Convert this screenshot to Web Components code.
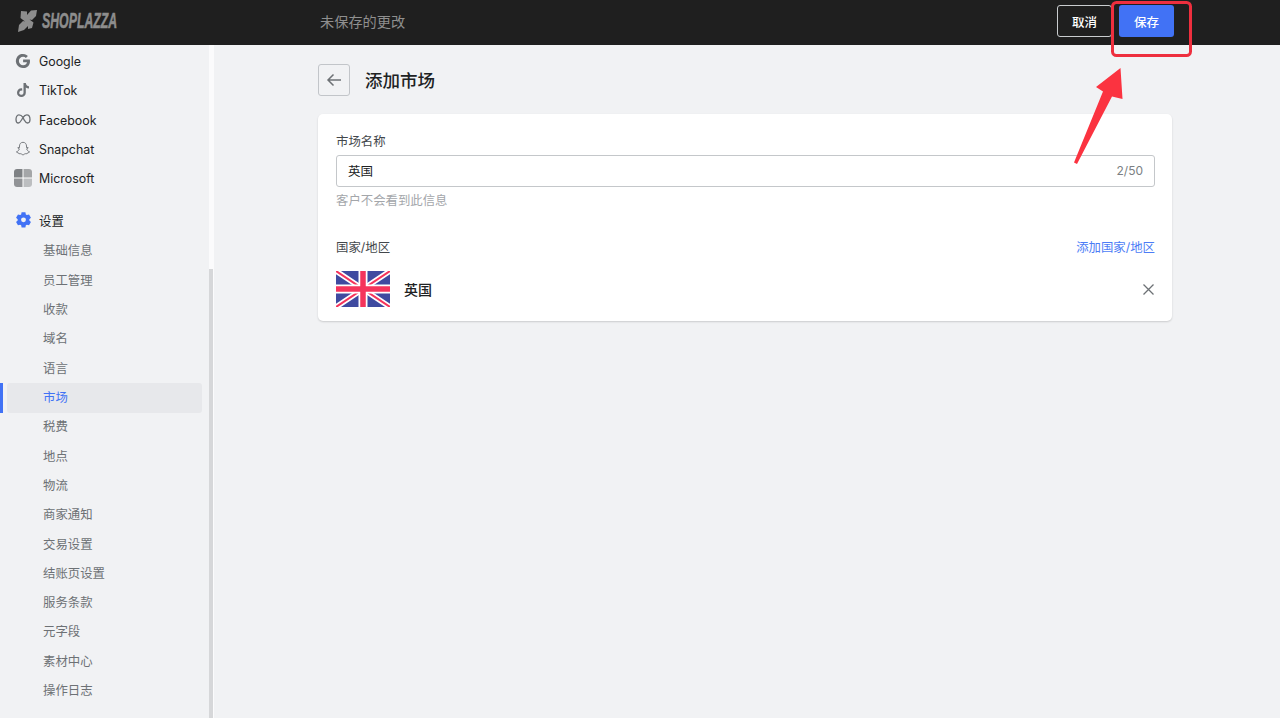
<!DOCTYPE html>
<html lang="zh">
<head>
<meta charset="utf-8">
<title>添加市场</title>
<style>
  html, body { margin: 0; height: 100%; }
  body {
    overflow: hidden;
    background: #f1f2f4;
    font-family: Inter, "Noto Sans CJK SC", sans-serif;
  }
</style>
</head>
<body>
<app-shell>
  <top-bar slot="top"></top-bar>
  <side-nav slot="side">
    <nav-item label="Google" icon="google"></nav-item>
    <nav-item label="TikTok" icon="tiktok"></nav-item>
    <nav-item label="Facebook" icon="meta"></nav-item>
    <nav-item label="Snapchat" icon="snapchat"></nav-item>
    <nav-item label="Microsoft" icon="microsoft"></nav-item>
    <nav-item label="设置" icon="gear" class="group"></nav-item>
    <nav-item label="基础信息" sub></nav-item>
    <nav-item label="员工管理" sub></nav-item>
    <nav-item label="收款" sub></nav-item>
    <nav-item label="域名" sub></nav-item>
    <nav-item label="语言" sub></nav-item>
    <nav-item label="市场" sub active></nav-item>
    <nav-item label="税费" sub></nav-item>
    <nav-item label="地点" sub></nav-item>
    <nav-item label="物流" sub></nav-item>
    <nav-item label="商家通知" sub></nav-item>
    <nav-item label="交易设置" sub></nav-item>
    <nav-item label="结账页设置" sub></nav-item>
    <nav-item label="服务条款" sub></nav-item>
    <nav-item label="元字段" sub></nav-item>
    <nav-item label="素材中心" sub></nav-item>
    <nav-item label="操作日志" sub></nav-item>
  </side-nav>
  <market-form slot="main"></market-form>
  <red-callout slot="over"></red-callout>
</app-shell>

<script>
class AppShell extends HTMLElement {
  constructor() {
    super();
    this.attachShadow({ mode: "open" }).innerHTML = `
    <style>
      :host { display: block; position: relative; width: 100%; height: 718px; overflow: hidden; }
      .body { display: flex; height: 673px; }
    </style>
    <slot name="top"></slot>
    <div class="body">
      <slot name="side"></slot>
      <slot name="main"></slot>
    </div>
    <slot name="over"></slot>
    `;
  }
}

class TopBar extends HTMLElement {
  constructor() {
    super();
    this.attachShadow({ mode: "open" }).innerHTML = `
    <style>
      :host {
        display: flex;
        align-items: center;
        height: 45px;
        background: #1f1f1f;
        box-sizing: border-box;
        padding: 0 106px 3px 18px;
        font-family: Inter, "Noto Sans CJK SC", sans-serif;
      }
      .logo { display: flex; align-items: center; width: 302px; flex: none; }
      .logo svg { flex: none; margin-right: 5px; }
      .word {
        display: inline-block;
        font: italic 700 22.4px/24px "Liberation Sans", sans-serif;
        color: #8d8d8d;
        -webkit-text-stroke: .6px #8d8d8d;
        transform: scaleX(.55);
        transform-origin: left center;
        width: 76px;
        white-space: nowrap;
      }
      .msg { color: #8f8f8f; font-size: 14.2px; flex: 1; }
      .btn {
        box-sizing: border-box;
        height: 32px;
        border-radius: 3px;
        font-size: 12.5px;
        font-family: inherit;
        font-weight: 500;
        color: #fff;
        padding: 0;
      }
      .cancel { width: 55px; background: #1f1f1f; border: 1px solid #c9cccf; margin-right: 7px; }
      .save { width: 55px; background: #4172f5; border: 0; }
    </style>
    <div class="logo">
      <svg width="19" height="22" viewBox="0 0 19 22">
        <path fill="#8d8d8d" d="M3 1 9 1.500 9 5 13 .5 19 0 18 6 14 10 11.500 9.500 15.500 12.500 14 18 10 19 10 16 6 20 0 22 1 15 5 11 7 11.500 2.500 8Z"/>
      </svg>
      <span class="word">SHOPLAZZA</span>
    </div>
    <span class="msg">未保存的更改</span>
    <button class="btn cancel">取消</button>
    <button class="btn save">保存</button>
    `;
  }
}

class SideNav extends HTMLElement {
  constructor() {
    super();
    this.attachShadow({ mode: "open" }).innerHTML = `
    <style>
      :host {
        display: block;
        position: relative;
        flex: none;
        width: 214px;
        height: 673px;
        overflow: hidden;
        box-sizing: border-box;
        padding-top: 2px;
        background: #f1f2f4;
      }
      .track { position: absolute; top: 0; right: 0; bottom: 0; width: 5px; background: #fbfbfc; }
      .thumb { position: absolute; top: 224px; right: 1px; bottom: 0; width: 4px; background: #d6d7d9; }
    </style>
    <slot></slot>
    <div class="track"></div>
    <div class="thumb"></div>
    `;
  }
}

const NAV_ICONS = {
  google: `<svg width="16" height="16" viewBox="0 0 16 16"><path fill="#6d7175" d="M8.100 6.600h6.700c.1.500.2 1 .2 1.600 0 4.100-2.800 6.900-6.900 6.900A7.100 7.100 0 1 1 12.900 2.900l-2 2A4.200 4.200 0 0 0 8.100 3.800a4.200 4.200 0 1 0 0 8.400c2.100 0 3.500-1.100 3.900-2.900H8.100Z"/></svg>`,
  tiktok: `<svg width="16" height="16" viewBox="0 0 16 16"><path fill="#6d7175" d="M8.500 1h2.300c.2 1.900 1.400 3.100 3.200 3.300v2.300c-1.200 0-2.300-.4-3.200-1v5.100a4.400 4.400 0 1 1-4.400-4.400c.3 0 .5 0 .8.100v2.400a2.100 2.100 0 1 0 1.300 1.900Z"/></svg>`,
  meta: `<svg width="16" height="16" viewBox="0 0 16 16"><path fill="none" stroke="#6d7175" stroke-width="1.300" d="M3.900 3.800C2 3.800 1 6.200 1 8.500 1 10.600 1.900 12 3.300 12c1.300 0 2.200-1.100 3.400-3.200l1.100-1.900C9.300 4.500 10.400 3.800 11.700 3.800c2 0 3.300 2.200 3.300 4.800 0 2-.9 3.400-2.500 3.400-1.300 0-2.100-.9-3.400-3.100L8 6.300C6.300 3.900 5.100 3.800 3.900 3.800Z"/></svg>`,
  snapchat: `<svg width="16" height="16" viewBox="0 0 16 16"><path fill="none" stroke="#6d7175" stroke-width=".9" stroke-linejoin="round" d="M8 1.300c2.200 0 3.500 1.700 3.500 3.700v1.700l1.400-.3c.5.300.3.800-.1 1l-1.100.5c.3 1.200 1.300 2.500 2.900 3-.2.700-1.300.6-1.900.9-.3.500-.2.900-.8.900-.7 0-1.500-.2-2.200.2-.6.400-1 1-1.700 1s-1.100-.6-1.700-1c-.7-.4-1.500-.2-2.200-.2-.6 0-.5-.4-.8-.9-.6-.3-1.700-.2-1.900-.9 1.600-.5 2.600-1.800 2.900-3l-1.100-.5c-.4-.2-.6-.7-.1-1l1.400.3V5c0-2 1.300-3.700 3.500-3.700Z"/></svg>`,
  microsoft: `<svg width="18" height="18" viewBox="0 0 18 18" style="margin-left:-1px"><rect width="18" height="18" rx="3" fill="#fff"/><path fill="#7e8184" d="M0 3a3 3 0 0 1 3-3h5.500v8.500H0Z"/><path fill="#a4a6a8" d="M9.500 0H15a3 3 0 0 1 3 3v5.500H9.500Z"/><path fill="#919396" d="M0 9.500h8.500V18H3a3 3 0 0 1-3-3Z"/><path fill="#bcbec0" d="M9.500 9.500H18V15a3 3 0 0 1-3 3H9.500Z"/></svg>`,
  gear: `<svg width="17" height="17" viewBox="0 0 16 16"><path fill="#4172f5" fill-rule="evenodd" d="M6.200 .3h3.600l.4 2 1 .6 2-.6 1.800 3.100-1.500 1.400v1.200l1.500 1.400-1.800 3.100-2-.6-1 .6-.4 2H6.200l-.4-2-1-.6-2 .6L1 9.400 2.500 8V6.800L1 5.400l1.800-3.100 2 .6 1-.6ZM8 5.100a2.300 2.300 0 1 0 0 4.600 2.300 2.300 0 0 0 0-4.600Z"/></svg>`,
};

class NavItem extends HTMLElement {
  connectedCallback() {
    if (this.shadowRoot) return;
    const label = this.getAttribute("label");
    const icon = NAV_ICONS[this.getAttribute("icon")];
    this.attachShadow({ mode: "open" }).innerHTML = `
    <style>
      :host {
        display: block;
        position: relative;
        height: 29.33px;
        font-size: 12.4px;
        color: #202223;
      }
      :host(.group) { margin-top: 13.6px; }
      :host([sub]) { color: #6d7175; }
      :host([active]) { color: #4172f5; }
      .row {
        display: flex;
        align-items: center;
        gap: 7px;
        height: 100%;
        padding-left: 15px;
        white-space: nowrap;
      }
      :host([sub]) .row { padding-left: 43px; }
      .icon { width: 17px; display: flex; margin-bottom: 2px; }
      span { position: relative; }
      :host(.group) span, :host([sub]) span { margin-bottom: 2px; }
      .bg {
        position: absolute;
        left: 7px;
        width: 195px;
        top: 0;
        bottom: 0;
        background: #e7e8eb;
        border-radius: 3px;
      }
      .mark {
        position: absolute;
        left: 0;
        top: 0;
        bottom: 0;
        width: 3px;
        background: #4172f5;
      }
    </style>
    ${this.hasAttribute("active") ? '<div class="bg"></div><div class="mark"></div>' : ""}
    <div class="row">
      ${icon ? `<div class="icon">${icon}</div>` : ""}
      <span>${label}</span>
    </div>
    `;
  }
}

class MarketForm extends HTMLElement {
  constructor() {
    super();
    this.attachShadow({ mode: "open" }).innerHTML = `
    <style>
      :host {
        display: block;
        flex: none;
        width: 854px;
        margin-left: 104px;
        padding-top: 19px;
        color: #202223;
      }
      header { display: flex; align-items: center; gap: 15px; height: 32px; margin-bottom: 18px; }
      .back {
        box-sizing: border-box;
        width: 32px;
        height: 32px;
        display: flex;
        align-items: center;
        justify-content: center;
        border: 1px solid #c2c5c9;
        border-radius: 3px;
        background: #f1f2f4;
      }
      h1 { margin: 0; font-size: 17.5px; font-weight: 500; line-height: 34px; height: 32px; }
      .card {
        box-sizing: border-box;
        height: 207px;
        background: #fff;
        border-radius: 5px;
        box-shadow: 0 1px 2px rgba(0,0,0,.16);
        padding: 18px 17px 18px 18px;
      }
      label { display: block; font-size: 12.4px; line-height: 20px; color: #43474b; }
      .input {
        box-sizing: border-box;
        display: flex;
        align-items: center;
        justify-content: space-between;
        height: 32px;
        margin-top: 3px;
        padding: 0 11px 2px;
        border: 1px solid #c4c7ca;
        border-radius: 3px;
        font-size: 12.5px;
      }
      .count { color: #7b7f83; font-size: 12px; }
      .hint { font-size: 12.4px; line-height: 20px; margin-top: 4px; color: #a3a6aa; }
      .row { display: flex; justify-content: space-between; margin-top: 27px; }
      a { font-size: 12.4px; line-height: 20px; color: #4c7cf6; text-decoration: none; }
      .country { display: flex; align-items: center; gap: 14px; margin-top: 13px; height: 36px; font-size: 14px; font-weight: 500; }
      .country span { flex: 1; }
      .country svg:last-child { margin-right: 1px; }
      svg { display: block; }
    </style>
    <header>
      <div class="back">
        <svg width="16" height="16" viewBox="0 0 16 16" fill="none" stroke="#6d7175" stroke-width="1.500">
          <path d="M15 8H2M7.500 2.500 2 8l5.500 5.500"/>
        </svg>
      </div>
      <h1>添加市场</h1>
    </header>
    <section class="card">
      <label>市场名称</label>
      <div class="input"><span>英国</span><span class="count">2/50</span></div>
      <div class="hint">客户不会看到此信息</div>
      <div class="row"><label>国家/地区</label><a href="#">添加国家/地区</a></div>
      <div class="country">
        <svg width="54" height="36" viewBox="0 0 54 36">
          <rect width="54" height="36" fill="#3f4aa0"/>
          <path d="M0 0 54 36M54 0 0 36" stroke="#fff" stroke-width="5.500"/>
          <path d="M0 0 54 36M54 0 0 36" stroke="#f5345c" stroke-width="2"/>
          <path d="M27 0V36M0 18H54" stroke="#fff" stroke-width="9"/>
          <path d="M27 0V36M0 18H54" stroke="#f5345c" stroke-width="5.500"/>
        </svg>
        <span>英国</span>
        <svg width="11" height="11" viewBox="0 0 11 11" stroke="#6d7175" stroke-width="1.300">
          <path d="M.5 .5 10.500 10.500M10.500 .5 .5 10.500"/>
        </svg>
      </div>
    </section>
    `;
  }
}

// red markup drawn on top of the screenshot
class RedCallout extends HTMLElement {
  constructor() {
    super();
    this.attachShadow({ mode: "open" }).innerHTML = `
    <style>
      :host { display: block; position: absolute; left: 0; top: 0; width: 1280px; height: 718px; pointer-events: none; }
      svg { display: block; }
    </style>
    <svg width="1280" height="718" viewBox="0 0 1280 718">
      <rect x="1112.500" y="2.500" width="78" height="53" rx="4" fill="none" stroke="#ee2f3e" stroke-width="3"/>
      <path fill="#fb3340" d="M1120.500 68 1122.500 99 1112 96.500 1077 164 1074 162.500 1103 91.500 1096 87Z"/>
    </svg>
    `;
  }
}

customElements.define("app-shell", AppShell);
customElements.define("top-bar", TopBar);
customElements.define("side-nav", SideNav);
customElements.define("nav-item", NavItem);
customElements.define("market-form", MarketForm);
customElements.define("red-callout", RedCallout);
</script>
</body>
</html>
